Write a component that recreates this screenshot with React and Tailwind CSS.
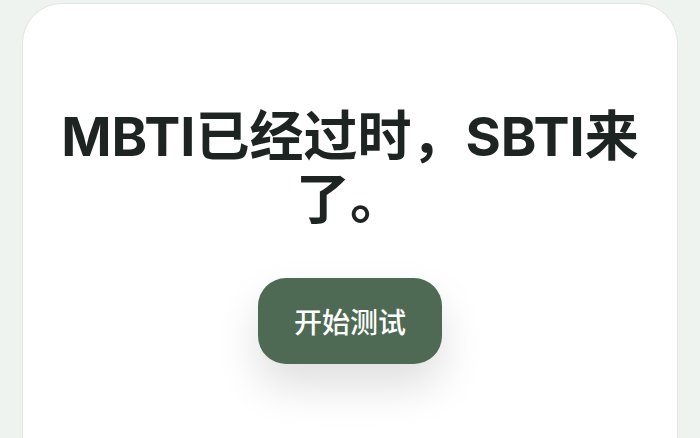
export default function App() {
  return (
    <div className="min-h-screen bg-[#eff3f0] px-[22px] pt-[3px] overflow-hidden h-[438px]">
      <div className="h-[600px] bg-white border border-[#e1e6e2] rounded-[40px] pt-[101px] flex flex-col items-center text-center">
        <h1
          className="text-[54px] leading-[63px] font-bold text-[#1e2421] px-8"
          style={{ fontFamily: 'Inter, "Noto Sans CJK SC", sans-serif' }}
        >
          MBTI已经过时，SBTI来了。
        </h1>
        <button
          className="mt-[47px] w-[184px] h-[86px] rounded-[28px] bg-[#4e6a54] text-white text-[28px] font-medium shadow-[0_22px_44px_rgba(0,0,0,0.13)]"
          style={{ fontFamily: '"Noto Sans CJK SC", sans-serif' }}
        >
          开始测试
        </button>
      </div>
    </div>
  );
}
